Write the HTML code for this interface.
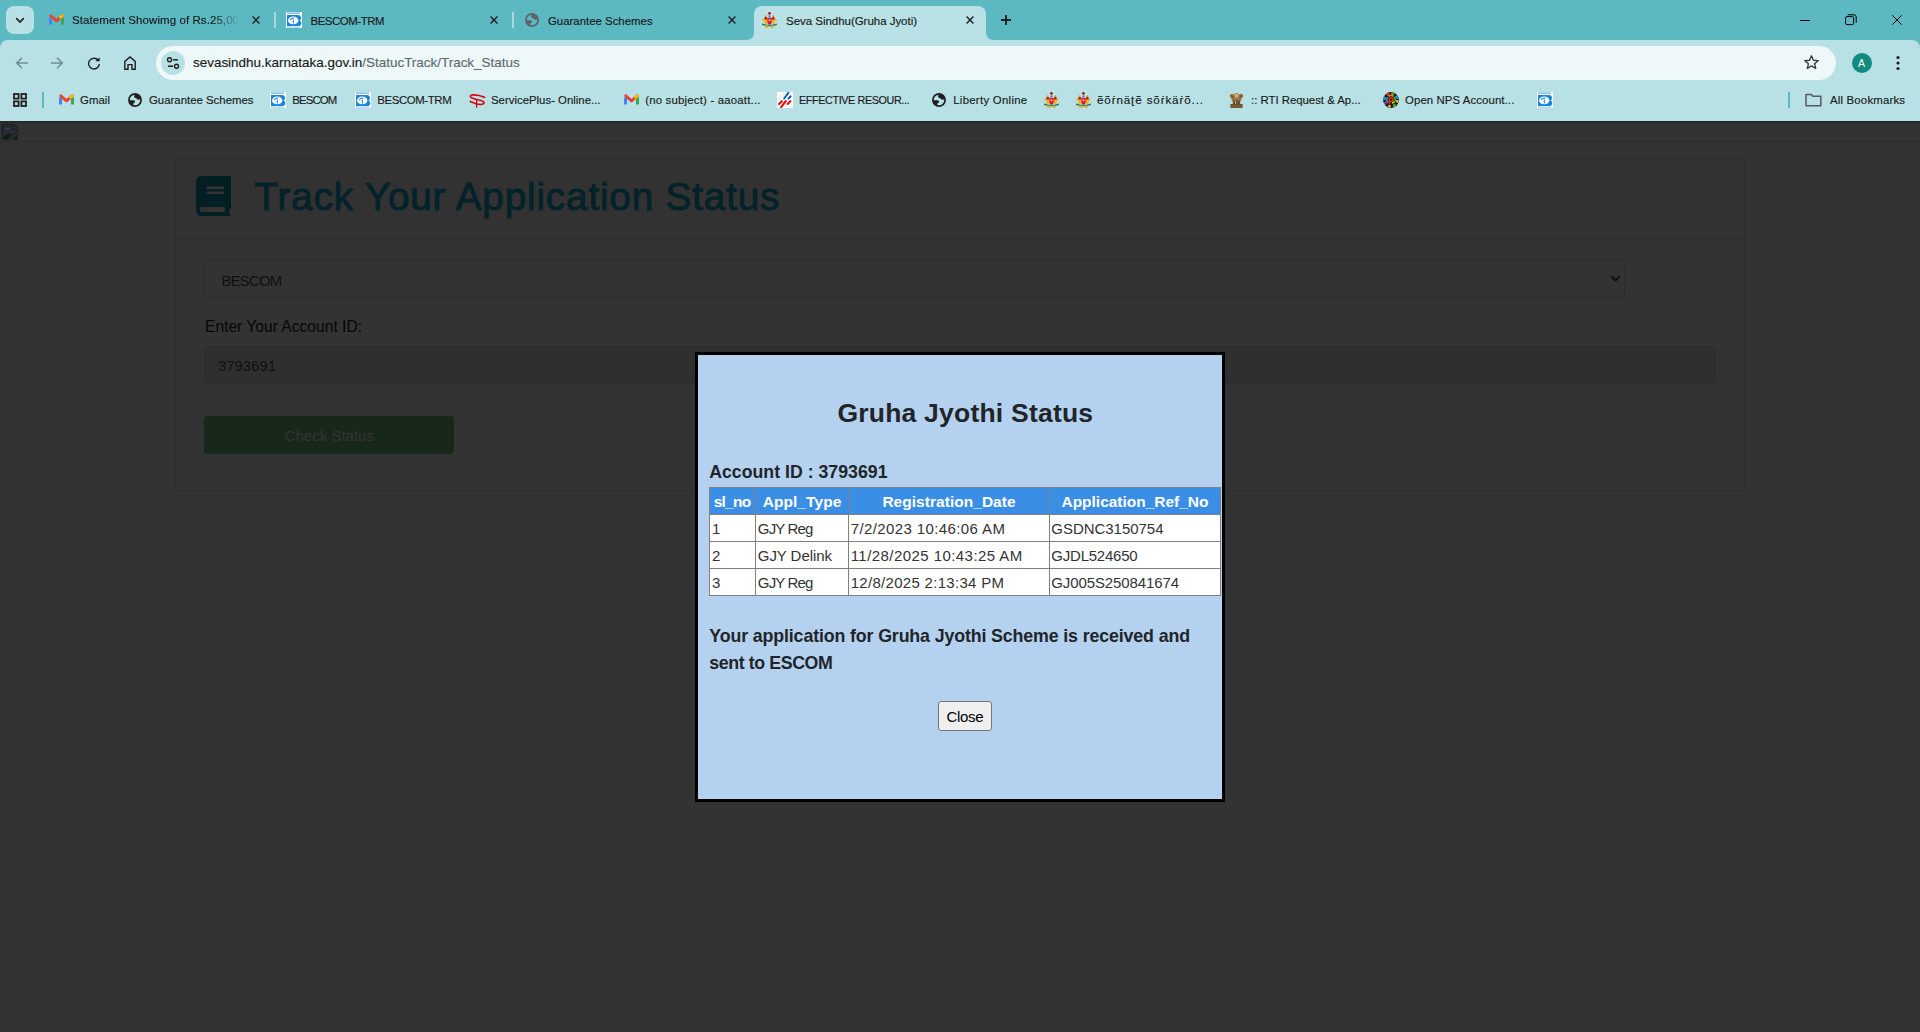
<!DOCTYPE html><html><head><meta charset="utf-8"><style>
html,body{margin:0;padding:0;}
body{width:1920px;height:1032px;position:relative;overflow:hidden;background:#333333;font-family:'Liberation Sans', sans-serif;}
.t{position:absolute;white-space:nowrap;line-height:0;}
.u{-webkit-text-stroke:0.15px currentColor;}
svg{display:block}
</style></head><body>
<div style="position:absolute;left:0px;top:0px;width:1920px;height:56px;background:#5cb8c1"></div>
<div style="position:absolute;left:6px;top:6px;width:28px;height:28px;background:#b8e1e5;border-radius:8px"></div>
<svg style="position:absolute;left:15px;top:17px;" width="10" height="7" viewBox="0 0 10 7"><path d="M1.2 1.2 L5 5 L8.8 1.2" stroke="#1f1f1f" stroke-width="1.7" fill="none"/></svg>
<svg style="position:absolute;left:49px;top:14px;" width="15" height="11" viewBox="0 0 15 11"><path d="M1.5 3.5 L1.5 10.5" stroke="#4285f4" stroke-width="3" stroke-linecap="butt"/><path d="M13.5 3.5 L13.5 10.5" stroke="#34a853" stroke-width="3"/><path d="M1.8 1.8 L7.5 6.8 L13.2 1.8" stroke="#ea4335" stroke-width="3" fill="none" stroke-linecap="round" stroke-linejoin="round"/><path d="M11.6 3.2 L13.2 1.8" stroke="#fbbc04" stroke-width="3" stroke-linecap="round"/></svg>
<div class="t u" style="left:72px;top:21.02px;font-size:11.5px;color:#1a1a1a;font-weight:400;width:168px;overflow:hidden;-webkit-mask-image:linear-gradient(90deg,#000 140px,transparent 168px);mask-image:linear-gradient(90deg,#000 140px,transparent 168px);line-height:normal;top:14.09px;letter-spacing:0.074px;">Statement Showimg of Rs.25,00</div>
<svg style="position:absolute;left:252px;top:16px;" width="8" height="8" viewBox="0 0 8 8"><path d="M0.6 0.6 L7.4 7.4 M7.4 0.6 L0.6 7.4" stroke="#1f1f1f" stroke-width="1.4"/></svg>
<div style="position:absolute;left:274px;top:12px;width:2px;height:16px;background:#a9d9de"></div>
<svg style="position:absolute;left:286px;top:12px;" width="16" height="16" viewBox="0 0 16 16"><rect x="0" y="0" width="16" height="16" fill="#fff"/><rect x="1" y="0.5" width="13" height="1.2" fill="#6aa8e0"/><path d="M1 3 H11.5 Q15 3 15 6.2 Q15 7.8 13.6 8.5 Q15.3 9.3 15.3 11.2 Q15.3 14 11.8 14 H1 Z" fill="#1a86d8"/><ellipse cx="7.2" cy="8.4" rx="5.2" ry="3.9" fill="#fff"/><path d="M4 8 Q6 5.5 8.5 6.2 M7.3 7.5 V11.5" stroke="#1a86d8" stroke-width="1.1" fill="none"/><rect x="1" y="14.6" width="13" height="1" fill="#8fbfe8"/></svg>
<div class="t u" style="left:310.5px;top:21.05px;font-size:11.4px;color:#1a1a1a;font-weight:400;letter-spacing:-0.427px;">BESCOM-TRM</div>
<svg style="position:absolute;left:490px;top:16px;" width="8" height="8" viewBox="0 0 8 8"><path d="M0.6 0.6 L7.4 7.4 M7.4 0.6 L0.6 7.4" stroke="#1f1f1f" stroke-width="1.4"/></svg>
<div style="position:absolute;left:512px;top:12px;width:2px;height:16px;background:#a9d9de"></div>
<svg style="position:absolute;left:525px;top:13px;" width="14" height="14" viewBox="0 0 14 14"><circle cx="7" cy="7" r="6.1" stroke="#5f6368" stroke-width="1.7" fill="none"/><path d="M6.4 1.2 H8.6 Q11.6 2 12.7 5 L11.7 6.5 Q10.2 7.3 9.3 6.3 Q8.7 5.3 7.3 5.1 Q6 4.6 6.2 3.4 Z" fill="#5f6368"/><path d="M1.1 7.3 H5.5 Q7.1 7.5 7.1 8.9 Q6.2 10 5.3 10.4 V12.7 Q2 11.6 1.1 8.6 Z" fill="#5f6368"/></svg>
<div class="t u" style="left:548px;top:21.05px;font-size:11.4px;color:#1a1a1a;font-weight:400;letter-spacing:0.007px;">Guarantee Schemes</div>
<svg style="position:absolute;left:728px;top:16px;" width="8" height="8" viewBox="0 0 8 8"><path d="M0.6 0.6 L7.4 7.4 M7.4 0.6 L0.6 7.4" stroke="#1f1f1f" stroke-width="1.4"/></svg>
<div style="position:absolute;left:754px;top:6px;width:232px;height:34px;background:#b8e1e5;border-radius:8px 8px 0 0"></div>
<svg style="position:absolute;left:746px;top:32px;" width="8" height="8" viewBox="0 0 8 8"><path d="M0 8 Q8 8 8 0 L8 8 Z" fill="#b8e1e5"/></svg>
<svg style="position:absolute;left:986px;top:32px;" width="8" height="8" viewBox="0 0 8 8"><path d="M8 8 Q0 8 0 0 L0 8 Z" fill="#b8e1e5"/></svg>
<svg style="position:absolute;left:762px;top:12px;" width="15" height="16" viewBox="0 0 15 16"><circle cx="7.5" cy="1.4" r="1.3" fill="#a01030"/><rect x="6.6" y="3.4" width="1.8" height="2.2" fill="#3a70c0"/><path d="M2.2 6.5 Q1.4 9.5 2.8 12 L5.6 11.6 L5.3 6.8 Z" fill="#f2b418"/><path d="M12.8 6.5 Q13.6 9.5 12.2 12 L9.4 11.6 L9.7 6.8 Z" fill="#f2b418"/><circle cx="3.6" cy="4.3" r="1.1" fill="#f0a000"/><circle cx="11.4" cy="4.3" r="1.1" fill="#f0a000"/><circle cx="3.8" cy="6.2" r="1.5" fill="#d01818"/><circle cx="11.2" cy="6.2" r="1.5" fill="#d01818"/><circle cx="1.1" cy="7.8" r="0.8" fill="#d8a020"/><circle cx="13.9" cy="8" r="0.8" fill="#d8a020"/><path d="M5.3 6 H9.7 V10 Q9.7 12.3 7.5 12.9 Q5.3 12.3 5.3 10 Z" fill="#d01c30"/><rect x="6.7" y="7.3" width="1.6" height="2" fill="#f0c8d0"/><path d="M0 11.6 Q7.5 14.2 15 11.6 V13 Q7.5 15.6 0 13 Z" fill="#2a7a58"/><path d="M3.3 13.6 H6.2 V15.9 H3.3 Z M8.8 13.6 H11.7 V15.9 H8.8 Z" fill="#e8b030"/></svg>
<div class="t u" style="left:786px;top:21.02px;font-size:11.5px;color:#1a1a1a;font-weight:400;letter-spacing:-0.030px;">Seva Sindhu(Gruha Jyoti)</div>
<svg style="position:absolute;left:966px;top:16px;" width="8" height="8" viewBox="0 0 8 8"><path d="M0.6 0.6 L7.4 7.4 M7.4 0.6 L0.6 7.4" stroke="#1f1f1f" stroke-width="1.4"/></svg>
<svg style="position:absolute;left:1001px;top:15px;" width="10" height="10" viewBox="0 0 10 10"><path d="M5 0 V10 M0 5 H10" stroke="#1f1f1f" stroke-width="1.8"/></svg>
<div style="position:absolute;left:1800px;top:20px;width:10px;height:1px;background:#000"></div>
<svg style="position:absolute;left:1845px;top:14px;" width="12" height="12" viewBox="0 0 12 12"><rect x="0.6" y="2.6" width="8" height="8" rx="1.3" fill="none" stroke="#000" stroke-width="1"/><path d="M2.6 0.8 H9 Q11.2 0.8 11.2 3 V8.8" fill="none" stroke="#000" stroke-width="1"/></svg>
<svg style="position:absolute;left:1892px;top:15px;" width="10" height="10" viewBox="0 0 10 10"><path d="M0.3 0.3 L9.7 9.7 M9.7 0.3 L0.3 9.7" stroke="#000" stroke-width="1"/></svg>
<div style="position:absolute;left:0;top:40px;width:1920px;height:81px;background:#b8e1e5;border-radius:8px 8px 0 0"></div>
<svg style="position:absolute;left:15px;top:56px;" width="14" height="14" viewBox="0 0 14 14"><path d="M13 7 H2 M7 1.8 L1.8 7 L7 12.2" stroke="#6d8e92" stroke-width="1.6" fill="none"/></svg>
<svg style="position:absolute;left:50px;top:56px;" width="14" height="14" viewBox="0 0 14 14"><path d="M1 7 H12 M7 1.8 L12.2 7 L7 12.2" stroke="#6d8e92" stroke-width="1.6" fill="none"/></svg>
<svg style="position:absolute;left:87px;top:56px;" width="14" height="14" viewBox="0 0 14 14"><path d="M11.2 4.3 A5.35 5.35 0 1 0 12.3 8" stroke="#1f1f1f" stroke-width="1.4" fill="none"/><path d="M12.6 1.2 V5.3 H8.5 Z" fill="#1f1f1f"/></svg>
<svg style="position:absolute;left:123px;top:55px;" width="14" height="16" viewBox="0 0 14 16"><path d="M1.8 14.2 V6.4 L7 1.9 L12.2 6.4 V14.2 H9 V9.6 H5 V14.2 Z" stroke="#1f1f1f" stroke-width="1.4" fill="none" stroke-linejoin="miter"/></svg>
<div style="position:absolute;left:156px;top:46px;width:1680px;height:34px;background:#eef8f8;border-radius:17px"></div>
<div style="position:absolute;left:161px;top:51px;width:24px;height:24px;background:#b8e1e5;border-radius:12px"></div>
<svg style="position:absolute;left:166px;top:56px;" width="14" height="14" viewBox="0 0 14 14"><circle cx="3.5" cy="3.8" r="2" stroke="#1f1f1f" stroke-width="1.4" fill="none"/><path d="M7 3.8 H12" stroke="#1f1f1f" stroke-width="1.5"/><circle cx="10.5" cy="10.2" r="2" stroke="#1f1f1f" stroke-width="1.4" fill="none"/><path d="M2 10.2 H7" stroke="#1f1f1f" stroke-width="1.5"/></svg>
<div class="t u" style="left:193px;top:62.84px;font-size:13.45px;color:#1a1a1a;font-weight:400;">sevasindhu.karnataka.gov.in<span style="color:#5b6b6e">/StatucTrack/Track_Status</span></div>
<svg style="position:absolute;left:1803px;top:54px;" width="17" height="17" viewBox="0 0 17 17"><path d="M8.5 1.8 L10.4 6.3 L15.2 6.6 L11.5 9.7 L12.7 14.5 L8.5 11.9 L4.3 14.5 L5.5 9.7 L1.8 6.6 L6.6 6.3 Z" stroke="#3c3c3c" stroke-width="1.4" fill="none" stroke-linejoin="round"/></svg>
<div style="position:absolute;left:1852px;top:53px;width:20px;height:20px;border-radius:10px;background:#138a80"></div>
<div class="t" style="left:1858px;top:63.36px;font-size:10.5px;color:#ffffff;font-weight:400;">A</div>
<svg style="position:absolute;left:1896px;top:55px;" width="4" height="16" viewBox="0 0 4 16"><circle cx="2" cy="2.5" r="1.6" fill="#1f1f1f"/><circle cx="2" cy="8" r="1.6" fill="#1f1f1f"/><circle cx="2" cy="13.5" r="1.6" fill="#1f1f1f"/></svg>
<svg style="position:absolute;left:13px;top:93px;" width="14" height="14" viewBox="0 0 14 14"><rect x="1" y="1" width="4.6" height="4.6" stroke="#1f1f1f" stroke-width="1.8" fill="none"/><rect x="8.4" y="1" width="4.6" height="4.6" stroke="#1f1f1f" stroke-width="1.8" fill="none"/><rect x="1" y="8.4" width="4.6" height="4.6" stroke="#1f1f1f" stroke-width="1.8" fill="none"/><rect x="8.4" y="8.4" width="4.6" height="4.6" stroke="#1f1f1f" stroke-width="1.8" fill="none"/></svg>
<div style="position:absolute;left:42px;top:92px;width:2px;height:16px;background:#5cb8c1"></div>
<svg style="position:absolute;left:59px;top:94px;" width="15" height="11" viewBox="0 0 15 11"><path d="M1.5 3.5 L1.5 10.5" stroke="#4285f4" stroke-width="3" stroke-linecap="butt"/><path d="M13.5 3.5 L13.5 10.5" stroke="#34a853" stroke-width="3"/><path d="M1.8 1.8 L7.5 6.8 L13.2 1.8" stroke="#ea4335" stroke-width="3" fill="none" stroke-linecap="round" stroke-linejoin="round"/><path d="M11.6 3.2 L13.2 1.8" stroke="#fbbc04" stroke-width="3" stroke-linecap="round"/></svg>
<div class="t u" style="left:80px;top:99.75px;font-size:11.4px;color:#1a1a1a;font-weight:400;letter-spacing:0.062px;">Gmail</div>
<svg style="position:absolute;left:128px;top:93px;" width="14" height="14" viewBox="0 0 14 14"><circle cx="7" cy="7" r="6.1" stroke="#1f1f1f" stroke-width="1.7" fill="none"/><path d="M6.4 1.2 H8.6 Q11.6 2 12.7 5 L11.7 6.5 Q10.2 7.3 9.3 6.3 Q8.7 5.3 7.3 5.1 Q6 4.6 6.2 3.4 Z" fill="#1f1f1f"/><path d="M1.1 7.3 H5.5 Q7.1 7.5 7.1 8.9 Q6.2 10 5.3 10.4 V12.7 Q2 11.6 1.1 8.6 Z" fill="#1f1f1f"/></svg>
<div class="t u" style="left:149px;top:99.75px;font-size:11.4px;color:#1a1a1a;font-weight:400;letter-spacing:0.001px;">Guarantee Schemes</div>
<svg style="position:absolute;left:270px;top:92px;" width="16" height="16" viewBox="0 0 16 16"><rect x="0" y="0" width="16" height="16" fill="#fff"/><rect x="1" y="0.5" width="13" height="1.2" fill="#6aa8e0"/><path d="M1 3 H11.5 Q15 3 15 6.2 Q15 7.8 13.6 8.5 Q15.3 9.3 15.3 11.2 Q15.3 14 11.8 14 H1 Z" fill="#1a86d8"/><ellipse cx="7.2" cy="8.4" rx="5.2" ry="3.9" fill="#fff"/><path d="M4 8 Q6 5.5 8.5 6.2 M7.3 7.5 V11.5" stroke="#1a86d8" stroke-width="1.1" fill="none"/><rect x="1" y="14.6" width="13" height="1" fill="#8fbfe8"/></svg>
<div class="t u" style="left:292.3px;top:99.75px;font-size:11.4px;color:#1a1a1a;font-weight:400;letter-spacing:-0.875px;">BESCOM</div>
<svg style="position:absolute;left:355px;top:92px;" width="16" height="16" viewBox="0 0 16 16"><rect x="0" y="0" width="16" height="16" fill="#fff"/><rect x="1" y="0.5" width="13" height="1.2" fill="#6aa8e0"/><path d="M1 3 H11.5 Q15 3 15 6.2 Q15 7.8 13.6 8.5 Q15.3 9.3 15.3 11.2 Q15.3 14 11.8 14 H1 Z" fill="#1a86d8"/><ellipse cx="7.2" cy="8.4" rx="5.2" ry="3.9" fill="#fff"/><path d="M4 8 Q6 5.5 8.5 6.2 M7.3 7.5 V11.5" stroke="#1a86d8" stroke-width="1.1" fill="none"/><rect x="1" y="14.6" width="13" height="1" fill="#8fbfe8"/></svg>
<div class="t u" style="left:377.3px;top:99.75px;font-size:11.4px;color:#1a1a1a;font-weight:400;letter-spacing:-0.383px;">BESCOM-TRM</div>
<svg style="position:absolute;left:468.5px;top:93.5px;" width="17" height="15" viewBox="0 0 17 15"><path d="M15.5 3.3 Q9 0.4 3.2 0.9 Q-0.4 1.9 3 4 Q6 5.4 11 6.3 Q16.2 7.6 14.6 9.6 Q12 11.2 7 9.7 Q3.5 8.6 1.2 7.6" stroke="#e0000e" stroke-width="1.6" fill="none" stroke-linecap="round"/><path d="M7.6 5.5 V13.8" stroke="#e0000e" stroke-width="1.3"/></svg>
<div class="t u" style="left:491px;top:99.75px;font-size:11.4px;color:#1a1a1a;font-weight:400;letter-spacing:-0.001px;">ServicePlus- Online...</div>
<svg style="position:absolute;left:624px;top:94px;" width="15" height="11" viewBox="0 0 15 11"><path d="M1.5 3.5 L1.5 10.5" stroke="#4285f4" stroke-width="3" stroke-linecap="butt"/><path d="M13.5 3.5 L13.5 10.5" stroke="#34a853" stroke-width="3"/><path d="M1.8 1.8 L7.5 6.8 L13.2 1.8" stroke="#ea4335" stroke-width="3" fill="none" stroke-linecap="round" stroke-linejoin="round"/><path d="M11.6 3.2 L13.2 1.8" stroke="#fbbc04" stroke-width="3" stroke-linecap="round"/></svg>
<div class="t u" style="left:645.2px;top:99.75px;font-size:11.4px;color:#1a1a1a;font-weight:400;letter-spacing:0.195px;">(no subject) - aaoatt...</div>
<svg style="position:absolute;left:777px;top:92px;" width="16" height="16" viewBox="0 0 16 16"><rect width="16" height="16" fill="#fff"/><path d="M1.5 9 Q2.5 3 8 1.6" stroke="#d8d8d8" stroke-width="0.9" fill="none"/><path d="M11.3 0.9 L7.2 6.5 M13.6 4.4 L11.6 6.5" stroke="#0a5cb8" stroke-width="2" stroke-linecap="round"/><path d="M4.8 9.2 L2 12 M8.8 9 L4.2 15.2 M13.4 9.2 L10.6 12" stroke="#e81010" stroke-width="2.1" stroke-linecap="round"/></svg>
<div class="t u" style="left:799px;top:99.96px;font-size:10.8px;color:#1a1a1a;font-weight:400;letter-spacing:-0.389px;">EFFECTIVE RESOUR...</div>
<svg style="position:absolute;left:932px;top:93px;" width="14" height="14" viewBox="0 0 14 14"><circle cx="7" cy="7" r="6.1" stroke="#1f1f1f" stroke-width="1.7" fill="none"/><path d="M6.4 1.2 H8.6 Q11.6 2 12.7 5 L11.7 6.5 Q10.2 7.3 9.3 6.3 Q8.7 5.3 7.3 5.1 Q6 4.6 6.2 3.4 Z" fill="#1f1f1f"/><path d="M1.1 7.3 H5.5 Q7.1 7.5 7.1 8.9 Q6.2 10 5.3 10.4 V12.7 Q2 11.6 1.1 8.6 Z" fill="#1f1f1f"/></svg>
<div class="t u" style="left:953.2px;top:99.75px;font-size:11.4px;color:#1a1a1a;font-weight:400;letter-spacing:0.286px;">Liberty Online</div>
<svg style="position:absolute;left:1043.5px;top:92px;" width="15" height="16" viewBox="0 0 15 16"><circle cx="7.5" cy="1.4" r="1.3" fill="#a01030"/><rect x="6.6" y="3.4" width="1.8" height="2.2" fill="#3a70c0"/><path d="M2.2 6.5 Q1.4 9.5 2.8 12 L5.6 11.6 L5.3 6.8 Z" fill="#f2b418"/><path d="M12.8 6.5 Q13.6 9.5 12.2 12 L9.4 11.6 L9.7 6.8 Z" fill="#f2b418"/><circle cx="3.6" cy="4.3" r="1.1" fill="#f0a000"/><circle cx="11.4" cy="4.3" r="1.1" fill="#f0a000"/><circle cx="3.8" cy="6.2" r="1.5" fill="#d01818"/><circle cx="11.2" cy="6.2" r="1.5" fill="#d01818"/><circle cx="1.1" cy="7.8" r="0.8" fill="#d8a020"/><circle cx="13.9" cy="8" r="0.8" fill="#d8a020"/><path d="M5.3 6 H9.7 V10 Q9.7 12.3 7.5 12.9 Q5.3 12.3 5.3 10 Z" fill="#d01c30"/><rect x="6.7" y="7.3" width="1.6" height="2" fill="#f0c8d0"/><path d="M0 11.6 Q7.5 14.2 15 11.6 V13 Q7.5 15.6 0 13 Z" fill="#2a7a58"/><path d="M3.3 13.6 H6.2 V15.9 H3.3 Z M8.8 13.6 H11.7 V15.9 H8.8 Z" fill="#e8b030"/></svg>
<svg style="position:absolute;left:1075.5px;top:92px;" width="15" height="16" viewBox="0 0 15 16"><circle cx="7.5" cy="1.4" r="1.3" fill="#a01030"/><rect x="6.6" y="3.4" width="1.8" height="2.2" fill="#3a70c0"/><path d="M2.2 6.5 Q1.4 9.5 2.8 12 L5.6 11.6 L5.3 6.8 Z" fill="#f2b418"/><path d="M12.8 6.5 Q13.6 9.5 12.2 12 L9.4 11.6 L9.7 6.8 Z" fill="#f2b418"/><circle cx="3.6" cy="4.3" r="1.1" fill="#f0a000"/><circle cx="11.4" cy="4.3" r="1.1" fill="#f0a000"/><circle cx="3.8" cy="6.2" r="1.5" fill="#d01818"/><circle cx="11.2" cy="6.2" r="1.5" fill="#d01818"/><circle cx="1.1" cy="7.8" r="0.8" fill="#d8a020"/><circle cx="13.9" cy="8" r="0.8" fill="#d8a020"/><path d="M5.3 6 H9.7 V10 Q9.7 12.3 7.5 12.9 Q5.3 12.3 5.3 10 Z" fill="#d01c30"/><rect x="6.7" y="7.3" width="1.6" height="2" fill="#f0c8d0"/><path d="M0 11.6 Q7.5 14.2 15 11.6 V13 Q7.5 15.6 0 13 Z" fill="#2a7a58"/><path d="M3.3 13.6 H6.2 V15.9 H3.3 Z M8.8 13.6 H11.7 V15.9 H8.8 Z" fill="#e8b030"/></svg>
<div class="t u" style="left:1097px;top:99.68px;font-size:11.6px;color:#1a1a1a;font-weight:400;letter-spacing:0.890px;">ẽõṙnäʈẽ sõṙkäṙõ...</div>
<svg style="position:absolute;left:1229px;top:92px;" width="15" height="16" viewBox="0 0 15 16"><path d="M0.8 3 Q2.8 0.8 5 2.4 Q6 0.8 7.5 0.8 Q9 0.8 10 2.4 Q12.2 0.8 14.2 3 Q14.6 5.2 12.6 6.6 L12 9 H3 L2.4 6.6 Q0.4 5.2 0.8 3 Z" fill="#9a7545"/><path d="M5.8 2 Q7.5 0.6 9.2 2 Q9.6 4 9 5.5 H6 Q5.4 4 5.8 2 Z" fill="#cfae80"/><path d="M2.5 3.5 L4 5.5 M12.5 3.5 L11 5.5" stroke="#4e3a1e" stroke-width="0.9"/><rect x="3.8" y="8.2" width="7.4" height="4.3" fill="#86653a"/><path d="M5.2 8.6 V12.4 M7.5 8.6 V12.4 M9.8 8.6 V12.4" stroke="#3e2c14" stroke-width="0.9"/><rect x="6.2" y="8.8" width="0.9" height="3.4" fill="#e2cba2"/><path d="M1.4 12 H13.6 V15.9 H1.4 Z" fill="#6a4c26"/><path d="M2 13.9 H13" stroke="#a68656" stroke-width="0.8" stroke-dasharray="1.5 1"/></svg>
<div class="t u" style="left:1251px;top:99.75px;font-size:11.4px;color:#1a1a1a;font-weight:400;letter-spacing:-0.017px;">:: RTI Request &amp; Ap...</div>
<svg style="position:absolute;left:1383px;top:92px;" width="16" height="16" viewBox="0 0 16 16"><circle cx="8" cy="8" r="7.9" fill="#151515"/><circle cx="8" cy="8" r="6.4" fill="none" stroke="#f5c518" stroke-width="2.2" stroke-dasharray="2.6 2.4"/><circle cx="8" cy="8" r="6.4" fill="none" stroke="#7a30b0" stroke-width="2.2" stroke-dasharray="2.6 7.4" stroke-dashoffset="5"/><circle cx="8" cy="8" r="6.4" fill="none" stroke="#2090e0" stroke-width="2.2" stroke-dasharray="2.6 12.4" stroke-dashoffset="10"/><circle cx="8" cy="8" r="6.4" fill="none" stroke="#e82818" stroke-width="2.2" stroke-dasharray="2.6 17.4" stroke-dashoffset="15"/><circle cx="8" cy="8" r="6.4" fill="none" stroke="#30b030" stroke-width="2.2" stroke-dasharray="2.6 22.4" stroke-dashoffset="20"/><path d="M5 5.2 L3.4 8 L5 10.8" stroke="#2890e0" stroke-width="1.7" fill="none"/><path d="M11 5.2 L12.6 8 L11 10.8" stroke="#30b030" stroke-width="1.7" fill="none"/><path d="M5.4 4.4 Q8 2.6 10.6 4.4" stroke="#f08020" stroke-width="1.7" fill="none"/><circle cx="8.2" cy="7.6" r="1.9" fill="none" stroke="#e83010" stroke-width="1.5"/><path d="M6.4 7.8 V12.6" stroke="#e83010" stroke-width="1.5"/><path d="M9.2 11.6 L10.8 9.8" stroke="#f0d020" stroke-width="1.5"/></svg>
<div class="t u" style="left:1405px;top:99.75px;font-size:11.4px;color:#1a1a1a;font-weight:400;letter-spacing:0.092px;">Open NPS Account...</div>
<svg style="position:absolute;left:1537px;top:92px;" width="16" height="16" viewBox="0 0 16 16"><rect x="0" y="0" width="16" height="16" fill="#fff"/><rect x="1" y="0.5" width="13" height="1.2" fill="#6aa8e0"/><path d="M1 3 H11.5 Q15 3 15 6.2 Q15 7.8 13.6 8.5 Q15.3 9.3 15.3 11.2 Q15.3 14 11.8 14 H1 Z" fill="#1a86d8"/><ellipse cx="7.2" cy="8.4" rx="5.2" ry="3.9" fill="#fff"/><path d="M4 8 Q6 5.5 8.5 6.2 M7.3 7.5 V11.5" stroke="#1a86d8" stroke-width="1.1" fill="none"/><rect x="1" y="14.6" width="13" height="1" fill="#8fbfe8"/></svg>
<div style="position:absolute;left:1788px;top:92px;width:2px;height:16px;background:#5cb8c1"></div>
<svg style="position:absolute;left:1805px;top:93px;" width="17" height="14" viewBox="0 0 17 14"><path d="M1 1.5 H6.3 L8 3.3 H15.8 V12.8 H1 Z" stroke="#5a5a5a" stroke-width="1.5" fill="none" stroke-linejoin="round"/></svg>
<div class="t u" style="left:1830px;top:99.75px;font-size:11.4px;color:#1a1a1a;font-weight:400;letter-spacing:0.184px;">All Bookmarks</div>
<div style="position:absolute;left:0px;top:121px;width:1920px;height:2px;background:#292929"></div>
<div style="position:absolute;left:1px;top:123px;width:1919px;height:18px;border-left:1px solid #2f2f2f;border-top:1px solid #2f2f2f;box-sizing:border-box"></div>
<div style="position:absolute;left:0px;top:141px;width:1920px;height:1px;background:#2c2c2c"></div>
<svg style="position:absolute;left:2px;top:124px;" width="16" height="17" viewBox="0 0 16 17"><path d="M0.5 0.5 H10.5 Q15.5 1 15.5 5.5 V7.5 L8 15.5 H0.5 Z" fill="#262b35" stroke="#1d1d1d" stroke-width="1"/><path d="M15.5 10.5 V15.5 H10.5 Z" fill="#0f220d" stroke="#1d1d1d" stroke-width="1"/><path d="M1 15 Q4 8.5 10 10.5 L5.5 15 Z" fill="#0e1f0c"/><ellipse cx="5.5" cy="5" rx="2.3" ry="1" fill="#3b404a"/><path d="M10.5 0.5 V5.5 H15.5" fill="none" stroke="#1d1d1d" stroke-width="1"/></svg>
<div style="position:absolute;left:175px;top:158px;width:1568px;height:331px;border:1px solid #2d2d2d;background:#333"></div>
<div style="position:absolute;left:176px;top:159px;width:1568px;height:80px;background:#323232"></div>
<div style="position:absolute;left:176px;top:239px;width:1568px;height:1px;background:#2d2d2d"></div>
<svg style="position:absolute;left:196px;top:176px;" width="35" height="40" viewBox="0 0 35 40"><path d="M6 0 H35 V32 Q33 33 33 36 Q33 38 35 40 H6 Q0 40 0 34 V6 Q0 0 6 0 Z" fill="#041f24"/><rect x="10.5" y="10.5" width="17.5" height="2.6" fill="#333"/><rect x="10.5" y="15.5" width="17.5" height="2.6" fill="#333"/><path d="M6 31 H29 V36 H6 Q3.8 36 3.8 33.5 Q3.8 31 6 31 Z" fill="#333"/></svg>
<div class="t" style="left:254.5px;top:197.36px;font-size:38.8px;color:#04222a;font-weight:400;-webkit-text-stroke:0.95px #04222a;letter-spacing:0.777px;">Track Your Application Status</div>
<div style="position:absolute;left:204px;top:260px;width:1419px;height:36px;border:1px solid #2c2c2c;border-radius:4px;background:#333"></div>
<div class="t" style="left:221.5px;top:281.17px;font-size:14.8px;color:#0f1011;font-weight:400;letter-spacing:-0.728px;">BESCOM</div>
<svg style="position:absolute;left:1610px;top:275px;" width="11" height="8" viewBox="0 0 11 8"><path d="M1.2 1.2 L5.5 5.5 L9.8 1.2" stroke="#121212" stroke-width="2" fill="none"/></svg>
<div class="t" style="left:205px;top:326.59px;font-size:15.6px;color:#070708;font-weight:400;letter-spacing:0.004px;">Enter Your Account ID:</div>
<div style="position:absolute;left:204px;top:346px;width:1510px;height:36px;border:1px solid #2c2c2c;border-radius:4px;background:#2f2f30"></div>
<div class="t" style="left:218px;top:366.44px;font-size:14.9px;color:#0f1011;font-weight:400;letter-spacing:0.003px;">3793691</div>
<div style="position:absolute;left:204px;top:416px;width:250px;height:38px;border-radius:4px;background:#17281b"></div>
<div class="t" style="left:284.6px;top:435.80px;font-size:15px;color:#333333;font-weight:400;letter-spacing:0.016px;">Check Status</div>
<div style="position:absolute;left:695px;top:352px;width:524px;height:444px;border:3px solid #000;background:#b4d2ef"></div>
<div class="t" style="left:837.4px;top:412.82px;font-size:26.5px;color:#212529;font-weight:700;letter-spacing:0.217px;">Gruha Jyothi Status</div>
<div class="t" style="left:709.2px;top:471.87px;font-size:17.7px;color:#212529;font-weight:700;letter-spacing:0.019px;">Account ID : 3793691</div>
<div style="position:absolute;left:709px;top:487px;width:511px;height:27px;background:#3a8ee6"></div>
<div style="position:absolute;left:709px;top:514px;width:511px;height:81px;background:#ffffff"></div>
<div style="position:absolute;left:709px;top:487px;width:1px;height:109px;background:#808080"></div>
<div style="position:absolute;left:755px;top:487px;width:1px;height:109px;background:#808080"></div>
<div style="position:absolute;left:848px;top:487px;width:1px;height:109px;background:#808080"></div>
<div style="position:absolute;left:1049px;top:487px;width:1px;height:109px;background:#808080"></div>
<div style="position:absolute;left:1220px;top:487px;width:1px;height:109px;background:#808080"></div>
<div style="position:absolute;left:709px;top:487px;width:512px;height:1px;background:#808080"></div>
<div style="position:absolute;left:709px;top:514px;width:512px;height:1px;background:#808080"></div>
<div style="position:absolute;left:709px;top:541px;width:512px;height:1px;background:#808080"></div>
<div style="position:absolute;left:709px;top:568px;width:512px;height:1px;background:#808080"></div>
<div style="position:absolute;left:709px;top:595px;width:512px;height:1px;background:#808080"></div>
<div class="t" style="left:713.7px;top:501.83px;font-size:15.5px;color:#ffffff;font-weight:700;letter-spacing:-0.746px;">sl_no</div>
<div class="t" style="left:762.8px;top:501.83px;font-size:15.5px;color:#ffffff;font-weight:700;letter-spacing:0.051px;">Appl_Type</div>
<div class="t" style="left:882.4px;top:501.83px;font-size:15.5px;color:#ffffff;font-weight:700;letter-spacing:0.034px;">Registration_Date</div>
<div class="t" style="left:1061.5px;top:501.83px;font-size:15.5px;color:#ffffff;font-weight:700;letter-spacing:-0.022px;">Application_Ref_No</div>
<div class="t" style="left:712px;top:528.80px;font-size:15px;color:#333333;font-weight:400;">1</div>
<div class="t" style="left:757.8px;top:528.80px;font-size:15px;color:#333333;font-weight:400;letter-spacing:-0.832px;">GJY Reg</div>
<div class="t" style="left:850.7px;top:528.80px;font-size:15px;color:#333333;font-weight:400;letter-spacing:0.395px;">7/2/2023 10:46:06 AM</div>
<div class="t" style="left:1051.3px;top:528.80px;font-size:15px;color:#333333;font-weight:400;letter-spacing:-0.034px;">GSDNC3150754</div>
<div class="t" style="left:712px;top:555.80px;font-size:15px;color:#333333;font-weight:400;">2</div>
<div class="t" style="left:757.8px;top:555.80px;font-size:15px;color:#333333;font-weight:400;letter-spacing:-0.063px;">GJY Delink</div>
<div class="t" style="left:850.7px;top:555.80px;font-size:15px;color:#333333;font-weight:400;letter-spacing:0.440px;">11/28/2025 10:43:25 AM</div>
<div class="t" style="left:1051.3px;top:555.80px;font-size:15px;color:#333333;font-weight:400;letter-spacing:-0.223px;">GJDL524650</div>
<div class="t" style="left:712px;top:582.80px;font-size:15px;color:#333333;font-weight:400;">3</div>
<div class="t" style="left:757.8px;top:582.80px;font-size:15px;color:#333333;font-weight:400;letter-spacing:-0.832px;">GJY Reg</div>
<div class="t" style="left:850.7px;top:582.80px;font-size:15px;color:#333333;font-weight:400;letter-spacing:0.299px;">12/8/2025 2:13:34 PM</div>
<div class="t" style="left:1051.3px;top:582.80px;font-size:15px;color:#333333;font-weight:400;letter-spacing:-0.113px;">GJ005S250841674</div>
<div class="t" style="left:709.3px;top:636.03px;font-size:17.8px;color:#212529;font-weight:700;letter-spacing:-0.129px;">Your application for Gruha Jyothi Scheme is received and</div>
<div class="t" style="left:709.3px;top:662.63px;font-size:17.8px;color:#212529;font-weight:700;letter-spacing:-0.411px;">sent to ESCOM</div>
<div style="position:absolute;left:938px;top:701px;width:52px;height:28px;border:1px solid #767676;border-radius:3px;background:#efefef"></div>
<div class="t" style="left:946.4px;top:716.60px;font-size:15px;color:#000000;font-weight:400;letter-spacing:-0.315px;">Close</div>
</body></html>
